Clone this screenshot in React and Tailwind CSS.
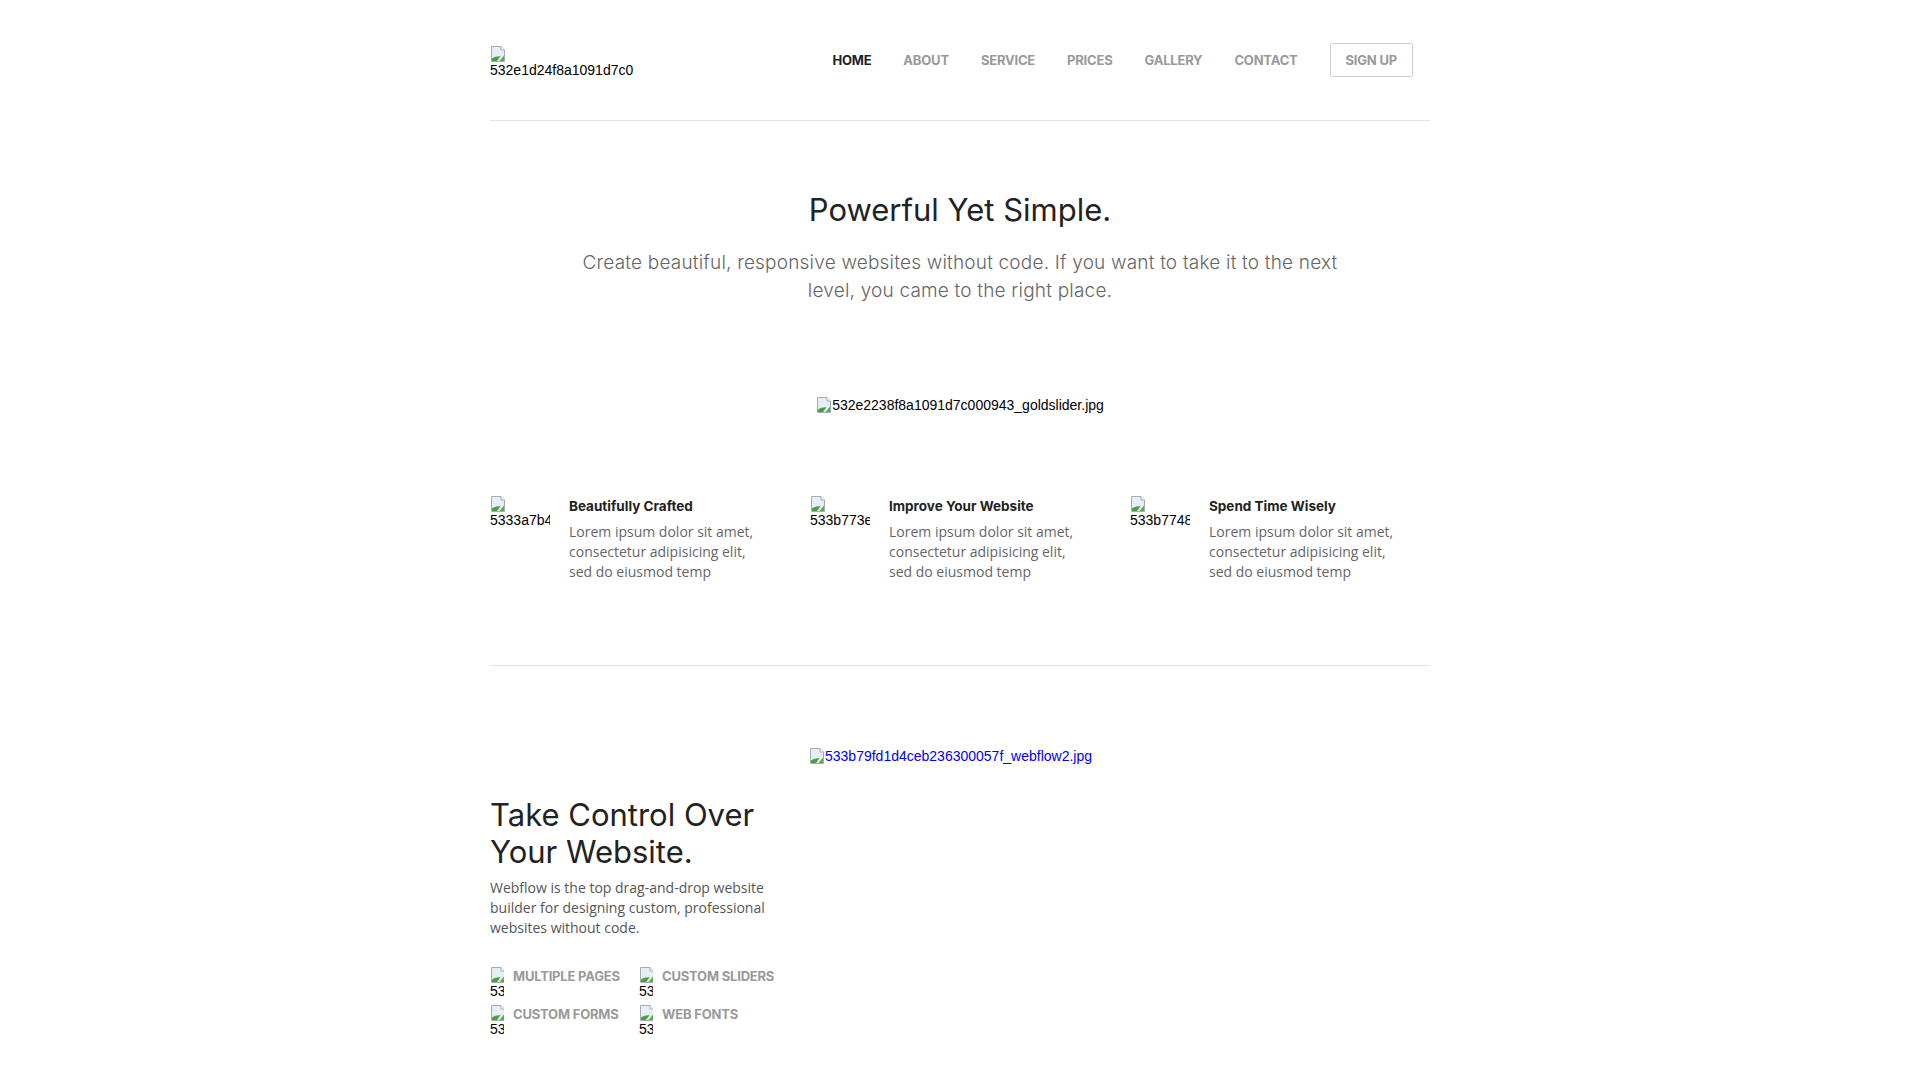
import React from 'react';

const heading = "font-['Inter','Liberation_Sans',sans-serif]";
const altFont = "font-['Liberation_Sans',Arial,sans-serif]";

function BrokenIcon() {
  return (
    <svg width="16" height="16" viewBox="0 0 16 16" className="block shrink-0">
      <path d="M1.5 0.5h9.5l3.5 3.5v11.5h-13z" fill="#e6edf5" stroke="#a3acb6" />
      <path d="M11 0.5v3.5h3.5" fill="#fff" stroke="#a3acb6" />
      <path d="M2 15v-2.5c2.5-1.8 5.5-2.6 8.5-2.3l-3.5 4.8z" fill="#4a9e3c" />
      <path d="M9.5 15l4.5-5.5v5.5z" fill="#5aae48" />
    </svg>
  );
}

// Chrome style broken <img> with alt text, clipped to its box
function BrokenImg({ alt, className = '', link = false }) {
  return (
    <span className={`flex flex-col overflow-hidden whitespace-nowrap text-[14px] leading-4 ${altFont} ${link ? 'text-[#0000ee]' : 'text-black'} ${className}`}>
      <BrokenIcon />
      <span>{alt}</span>
    </span>
  );
}

function InlineBroken({ alt, link = false }) {
  return (
    <span className={`inline-flex items-center whitespace-nowrap text-[14px] leading-4 ${altFont} ${link ? 'text-[#0000ee]' : 'text-black'}`}>
      <BrokenIcon />
      {alt}
    </span>
  );
}

const navItems = ['HOME', 'ABOUT', 'SERVICE', 'PRICES', 'GALLERY', 'CONTACT'];

const features = [
  { img: '5333a7b4f5a8c6e1', title: 'Beautifully Crafted' },
  { img: '533b773e1d4ceb23', title: 'Improve Your Website' },
  { img: '533b77481d4ceb23', title: 'Spend Time Wisely' },
];

const lorem = ['Lorem ipsum dolor sit amet,', 'consectetur adipisicing elit,', 'sed do eiusmod temp'];

const perks = ['MULTIPLE PAGES', 'CUSTOM SLIDERS', 'CUSTOM FORMS', 'WEB FONTS'];

export default function App() {
  return (
    <div className="min-h-screen bg-white font-['Open_Sans',sans-serif] text-[14px] leading-5 text-[#333]">
      <div className="mx-auto w-[940px]">
        {/* header */}
        <header className="flex items-start justify-between border-b border-[#e2e2e2] pt-[43px] pb-[42px]">
          <div className="mt-[3px]">
            <BrokenImg alt="532e1d24f8a1091d7c000941_logo.png" className="w-[143px]" />
          </div>
          <nav className={`mr-[17px] flex items-center ${heading}`}>
            {navItems.map((item, i) => (
              <a
                key={item}
                href="#"
                className={`px-[16px] text-[13px] font-bold tracking-[-0.2px] ${i === 0 ? 'text-[#222]' : 'text-[#999]'}`}
              >
                {item}
              </a>
            ))}
            <a
              href="#"
              className="ml-[16px] flex h-[34px] items-center rounded-[3px] border border-[#ccc] px-[15px] text-[13px] font-bold tracking-[-0.2px] text-[#999]"
            >
              SIGN UP
            </a>
          </nav>
        </header>

        {/* hero */}
        <section className="pt-[69px] text-center">
          <h1 className={`${heading} text-[31px] leading-[40px] font-normal text-[#222]`}>Powerful Yet Simple.</h1>
          <p className={`${heading} mx-auto mt-[19px] w-[765px] text-[19px] leading-[28px] font-light tracking-[0.2px] text-[#666]`}>
            Create beautiful, responsive websites without code. If you want to take it to the next level, you came to the right place.
          </p>
          <div className="mt-[92px] flex justify-center">
            <InlineBroken alt="532e2238f8a1091d7c000943_goldslider.jpg" />
          </div>
        </section>

        {/* features */}
        <section className="grid grid-cols-3 gap-x-[20px] border-b border-[#e2e2e2] pt-[83px] pb-[83px]">
          {features.map((f) => (
            <div key={f.title} className="flex">
              <div className="mr-[19px] w-[60px] shrink-0">
                <BrokenImg alt={f.img} className="w-[60px]" />
              </div>
              <div>
                <h3 className={`${heading} text-[13.5px] font-bold text-[#222]`}>{f.title}</h3>
                <p className="mt-[6px] text-[#666]">
                  {lorem.map((l) => (
                    <span key={l} className="block whitespace-nowrap">{l}</span>
                  ))}
                </p>
              </div>
            </div>
          ))}
        </section>

        {/* second section */}
        <section className="grid grid-cols-[300px_1fr] gap-x-[19px] pt-[82px]">
          <div className="pt-[48px]">
            <h2 className={`${heading} text-[31px] leading-[37px] font-normal text-[#222]`}>Take Control Over Your Website.</h2>
            <p className="mt-[8px] text-[#555]">
              Webflow is the top drag-and-drop website builder for designing custom, professional websites without code.
            </p>
            <div className="mt-[29px] grid w-[300px] grid-cols-[149px_1fr] gap-y-[6px]">
              {perks.map((p) => (
                <div key={p} className="flex items-start">
                  <BrokenImg alt="533b7a2e1d4ceb2363000589" className="mr-[9px] w-[14px] shrink-0" />
                  <span className={`${heading} pt-[1px] text-[13px] leading-4 font-bold tracking-[-0.2px] text-[#999]`}>{p}</span>
                </div>
              ))}
            </div>
          </div>
          <div>
            <a href="#">
              <InlineBroken alt="533b79fd1d4ceb236300057f_webflow2.jpg" link />
            </a>
          </div>
        </section>
      </div>
    </div>
  );
}
